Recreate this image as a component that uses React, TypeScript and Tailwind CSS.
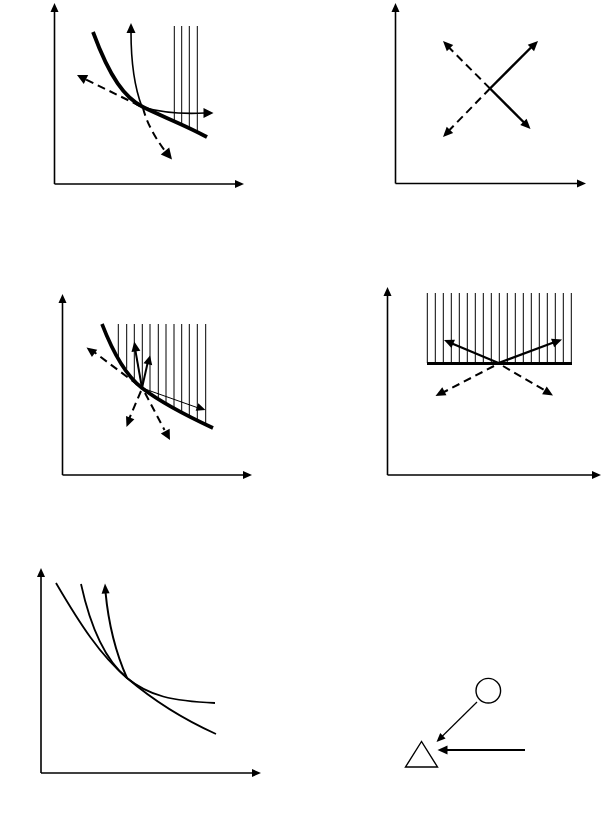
import React from "react";

type P = [number, number];

function Head({ tip, from, len = 9, w = 4 }: { tip: P; from: P; len?: number; w?: number }) {
  const dx = tip[0] - from[0];
  const dy = tip[1] - from[1];
  const d = Math.hypot(dx, dy) || 1;
  const ux = dx / d;
  const uy = dy / d;
  const bx = tip[0] - ux * len;
  const by = tip[1] - uy * len;
  const pts = [
    [tip[0], tip[1]],
    [bx - uy * w, by + ux * w],
    [bx + uy * w, by - ux * w],
  ]
    .map((p) => p.join(","))
    .join(" ");
  return <polygon points={pts} fill="#000" />;
}

function Axes({ ox, oy, top, right }: { ox: number; oy: number; top: number; right: number }) {
  return (
    <g>
      <line x1={ox} y1={oy} x2={ox} y2={top + 8} stroke="#000" strokeWidth={1.6} />
      <line x1={ox} y1={oy} x2={right - 8} y2={oy} stroke="#000" strokeWidth={1.6} />
      <Head tip={[ox, top]} from={[ox, oy]} len={9} w={4} />
      <Head tip={[right, oy]} from={[ox, oy]} len={9} w={4} />
    </g>
  );
}

function interp(pts: P[], x: number) {
  for (let i = 0; i < pts.length - 1; i++) {
    const a = pts[i];
    const b = pts[i + 1];
    if (x >= a[0] && x <= b[0]) return a[1] + ((x - a[0]) / (b[0] - a[0])) * (b[1] - a[1]);
  }
  return pts[pts.length - 1][1];
}

function Cell({ vb, w, h, children }: { vb: string; w: number; h: number; children: React.ReactNode }) {
  return (
    <svg width={w} height={h} viewBox={vb} className="block">
      {children}
    </svg>
  );
}

const dash = "8 5";

function D1() {
  const vl: [number, number][] = [
    [174.3, 120],
    [181.7, 123],
    [189.3, 128],
    [197.3, 131],
  ];
  return (
    <Cell vb="0 0 302 240" w={302} h={240}>
      <Axes ox={54.5} oy={184} top={3} right={244} />
      {vl.map(([x, y]) => (
        <line key={x} x1={x} y1={26} x2={x} y2={y} stroke="#000" strokeWidth={1} />
      ))}
      <path d="M93,32 C110,78 125,98 143,107 S185,125 207,137" fill="none" stroke="#000" strokeWidth={3.8} />
      <path d="M142,107 Q131,78 131,32" fill="none" stroke="#000" strokeWidth={1.6} />
      <Head tip={[131, 23]} from={[131, 40]} len={10} w={4.5} />
      <path d="M142,107 Q170,115 205,113" fill="none" stroke="#000" strokeWidth={1.6} />
      <Head tip={[213.5, 113]} from={[200, 113]} len={10} w={5} />
      <line x1={140} y1={106} x2={84} y2={78.5} stroke="#000" strokeWidth={2} strokeDasharray={dash} />
      <Head tip={[77, 75]} from={[142, 107]} len={10} w={5} />
      <path d="M143,108 Q148,128 165,151" fill="none" stroke="#000" strokeWidth={2} strokeDasharray={dash} />
      <Head tip={[172, 159.5]} from={[160, 145]} len={11} w={5.5} />
    </Cell>
  );
}

function D2() {
  return (
    <Cell vb="302 0 302 240" w={302} h={240}>
      <Axes ox={395.5} oy={183.5} top={3} right={586} />
      <line x1={490} y1={88.5} x2={531} y2={47.5} stroke="#000" strokeWidth={2.4} />
      <Head tip={[538, 41]} from={[490, 88.5]} len={10} w={4.5} />
      <line x1={490} y1={88.5} x2={524} y2={122.5} stroke="#000" strokeWidth={2.4} />
      <Head tip={[530.5, 129]} from={[490, 88.5]} len={10} w={4.5} />
      <line x1={490} y1={88.5} x2={449} y2={47.5} stroke="#000" strokeWidth={2} strokeDasharray={dash} />
      <Head tip={[443, 41]} from={[490, 88.5]} len={10} w={4.5} />
      <line x1={490} y1={88.5} x2={449.5} y2={130} stroke="#000" strokeWidth={2} strokeDasharray={dash} />
      <Head tip={[443, 137]} from={[490, 88.5]} len={10} w={4.5} />
    </Cell>
  );
}

function D3() {
  const curve: P[] = [
    [102, 324],
    [120, 359],
    [142, 388],
    [173, 407],
    [210, 427],
    [213, 428],
  ];
  const xs = [118.3, 126.7, 134.3, 142.3, 150, 158.3, 166, 174, 181.7, 189.3, 197.3, 205.7];
  const c: P = [142, 388];
  return (
    <Cell vb="0 240 302 290" w={302} h={290}>
      <Axes ox={62.5} oy={475} top={294} right={252} />
      {xs.map((x) => (
        <line key={x} x1={x} y1={324} x2={x} y2={interp(curve, x) + 1} stroke="#000" strokeWidth={1} />
      ))}
      <path d="M102,324 C112,350 125,375 142,388 S185,415 213,428" fill="none" stroke="#000" strokeWidth={3.6} />
      <line x1={142} y1={388} x2={135.3} y2={350} stroke="#000" strokeWidth={2} />
      <Head tip={[134.3, 341.5]} from={c} len={10} w={4.5} />
      <line x1={142} y1={388} x2={147.6} y2={363} stroke="#000" strokeWidth={2} />
      <Head tip={[150, 355.5]} from={c} len={9} w={4.5} />
      <line x1={142} y1={388} x2={197} y2={407.5} stroke="#000" strokeWidth={1} />
      <Head tip={[205.5, 410]} from={c} len={9} w={4} />
      <line x1={138} y1={385} x2={94} y2={352} stroke="#000" strokeWidth={2} strokeDasharray={dash} />
      <Head tip={[86.5, 347.5]} from={c} len={10} w={4.5} />
      <line x1={141} y1={391} x2={129.5} y2={418} stroke="#000" strokeWidth={2} strokeDasharray={dash} />
      <Head tip={[126.5, 427]} from={c} len={10} w={4.5} />
      <line x1={145} y1={393} x2={164.5} y2={430} stroke="#000" strokeWidth={2} strokeDasharray={dash} />
      <Head tip={[170, 440]} from={c} len={10} w={5} />
    </Cell>
  );
}

function D4() {
  const xs = Array.from({ length: 19 }, (_, i) => 427.3 + i * 8);
  const c: P = [498.5, 363];
  return (
    <Cell vb="302 240 302 290" w={302} h={290}>
      <Axes ox={387.5} oy={475} top={287} right={601} />
      {xs.map((x) => (
        <line key={x} x1={x} y1={293} x2={x} y2={363} stroke="#000" strokeWidth={1} />
      ))}
      <line x1={427} y1={363.5} x2={572} y2={363.5} stroke="#000" strokeWidth={3} />
      <line x1={498.5} y1={363} x2={452} y2={343.5} stroke="#000" strokeWidth={2.2} />
      <Head tip={[444, 340]} from={c} len={10} w={4.5} />
      <line x1={498.5} y1={363} x2={553.5} y2={342.5} stroke="#000" strokeWidth={2.2} />
      <Head tip={[562, 339.5]} from={c} len={10} w={4.5} />
      <line x1={494} y1={366} x2={444} y2={392} stroke="#000" strokeWidth={2} strokeDasharray={dash} />
      <Head tip={[435.5, 396]} from={c} len={10} w={4.5} />
      <line x1={503} y1={366} x2={545} y2={390.5} stroke="#000" strokeWidth={2} strokeDasharray={dash} />
      <Head tip={[553, 395.5]} from={c} len={10} w={4.5} />
    </Cell>
  );
}

function D5() {
  return (
    <Cell vb="0 530 302 284" w={302} h={284}>
      <Axes ox={41} oy={773} top={568} right={261} />
      <path d="M56,583 C80,624 100,655 127,678 S185,720 216,734" fill="none" stroke="#000" strokeWidth={1.8} />
      <path d="M81,584 C90,625 105,660 127,678 S172,701 215,703" fill="none" stroke="#000" strokeWidth={1.8} />
      <path d="M127,678 Q110,640 105.5,592" fill="none" stroke="#000" strokeWidth={2} />
      <Head tip={[105, 583.5]} from={[106, 600]} len={10} w={4} />
    </Cell>
  );
}

function D6() {
  return (
    <Cell vb="302 530 302 284" w={302} h={284}>
      <circle cx={488.3} cy={690.7} r={12.3} fill="none" stroke="#000" strokeWidth={1.4} />
      <line x1={477} y1={702} x2={442} y2={736.5} stroke="#000" strokeWidth={1.2} />
      <Head tip={[436.5, 742]} from={[477, 702]} len={9} w={3.8} />
      <polygon points="421.5,741.5 405.5,767 437.5,767" fill="none" stroke="#000" strokeWidth={1.4} strokeLinejoin="miter" />
      <line x1={525} y1={750} x2={446} y2={750} stroke="#000" strokeWidth={2.2} />
      <Head tip={[437.5, 750]} from={[525, 750]} len={10} w={4.5} />
    </Cell>
  );
}

export default function App() {
  return (
    <div className="w-[604px] h-[814px] bg-white overflow-hidden">
      <div className="grid grid-cols-[302px_302px] grid-rows-[240px_290px_284px]">
        <D1 />
        <D2 />
        <D3 />
        <D4 />
        <D5 />
        <D6 />
      </div>
    </div>
  );
}
